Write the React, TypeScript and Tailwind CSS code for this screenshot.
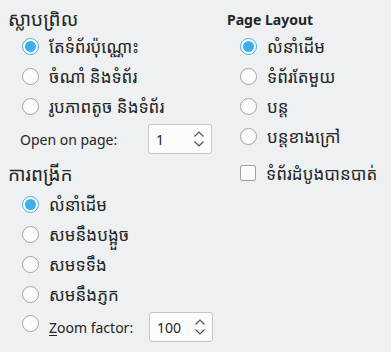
import React from "react";

const FONT = "font-['Noto_Sans','Noto_Sans_Khmer','Khmer_OS','DejaVu_Sans',sans-serif]";

const Radio = ({ checked }: { checked?: boolean }) =>
  checked ? (
    <span className="w-[17px] h-[17px] rounded-full border-[1.5px] border-[#3daee9] bg-white flex items-center justify-center shrink-0">
      <span className="w-[11px] h-[11px] rounded-full bg-[#3daee9]" />
    </span>
  ) : (
    <span className="block w-[17px] h-[17px] rounded-full border border-[#a0a2a4] bg-[#fcfcfc] shrink-0" />
  );

const RadioRow = ({ label, checked }: { label: string; checked?: boolean }) => (
  <div className="h-[30px] flex items-center gap-[10px]">
    <Radio checked={checked} />
    <span className="text-[17px] text-[#232627] leading-none whitespace-nowrap">{label}</span>
  </div>
);

const Spin = ({ value }: { value: string }) => (
  <div className="w-[64px] h-[30px] rounded-[3px] border border-[#c3c5c7] bg-[#fcfcfc] flex items-center justify-between pl-[7px] pr-[6px] shrink-0">
    <span className="text-[14px] text-[#232627]">{value}</span>
    <svg width="12" height="18" viewBox="0 0 12 18" fill="none" stroke="#4d4f51" strokeWidth="1.2">
      <path d="M1.5 6.5 L6 2 L10.5 6.5" />
      <path d="M1.5 11.5 L6 16 L10.5 11.5" />
    </svg>
  </div>
);

export default function App() {
  return (
    <div className={`w-[391px] h-[352px] bg-[#eff0f1] flex ${FONT} text-[#232627]`}>
      {/* LEFT COLUMN */}
      <div className="w-[222px] shrink-0 pl-[8px] pt-[7px]">
        <div className="h-[24px] flex items-center text-[19px]">ស្លាបព្រិល</div>
        <div className="pl-[14px]">
          <RadioRow label="តែទំព័រប៉ុណ្ណោះ" checked />
          <RadioRow label="ចំណាំ និងទំព័រ" />
          <RadioRow label="រូបភាពតូច និងទំព័រ" />
        </div>
        <div className="h-[34px] flex items-center pl-[12px] mt-[1px]">
          <span className="w-[128px] text-[14px]">Open on page:</span>
          <Spin value="1" />
        </div>
        <div className="h-[33px] flex items-end pb-[1px] text-[19px]">ការពង្រីក</div>
        <div className="pl-[14px]">
          <RadioRow label="លំនាំដើម" checked />
          <RadioRow label="សមនឹងបង្អួច" />
          <RadioRow label="សមទទឹង" />
          <RadioRow label="សមនឹងភ្ញក" />
          <div className="h-[36px] flex items-center">
            <div className="flex flex-col justify-start h-[36px] pt-[6px]">
              <Radio />
            </div>
            <span className="ml-[10px] w-[100px] text-[14px]">
              <span className="underline underline-offset-2">Z</span>oom factor:
            </span>
            <Spin value="100" />
          </div>
        </div>
      </div>

      {/* RIGHT COLUMN */}
      <div className="w-[169px] shrink-0 pt-[7px]">
        <div className="h-[24px] flex items-center pl-[5px] text-[14px] font-bold">Page Layout</div>
        <div className="pl-[18px]">
          <RadioRow label="លំនាំដើម" checked />
          <RadioRow label="ទំព័រតែមួយ" />
          <RadioRow label="បន្ត" />
          <RadioRow label="បន្តខាងក្រៅ" />
          <div className="h-[40px] flex items-center gap-[10px] pt-[4px]">
            <span className="block w-[16px] h-[16px] rounded-[2px] border border-[#a0a2a4] bg-[#fcfcfc] shrink-0" />
            <span className="text-[17px] leading-none whitespace-nowrap">ទំព័រដំបូងបានបាត់</span>
          </div>
        </div>
      </div>
    </div>
  );
}
